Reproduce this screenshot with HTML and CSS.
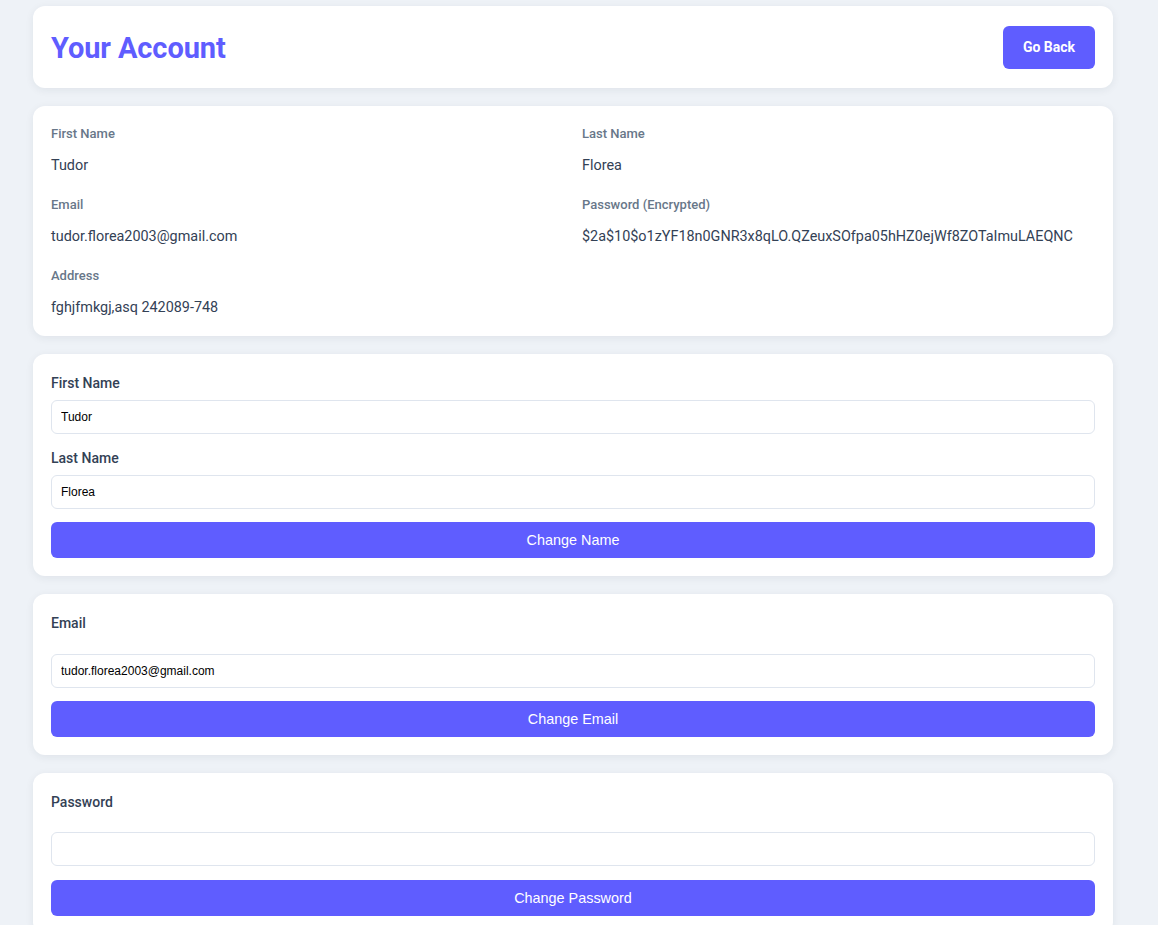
FILE: index.html
```html
<!DOCTYPE html>
<html lang="en">
<head>
<meta charset="utf-8">
<title>Your Account</title>
<link rel="stylesheet" href="styles.css">
</head>
<body>
<div class="page">
  <header class="card header">
    <h1 class="title">Your Account</h1>
    <button class="back-btn" type="button">Go Back</button>
  </header>

  <section class="card info">
    <div class="info-item">
      <div class="info-label">First Name</div>
      <div class="info-value">Tudor</div>
    </div>
    <div class="info-item">
      <div class="info-label">Last Name</div>
      <div class="info-value">Florea</div>
    </div>
    <div class="info-item">
      <div class="info-label">Email</div>
      <div class="info-value">tudor.florea2003@gmail.com</div>
    </div>
    <div class="info-item">
      <div class="info-label">Password (Encrypted)</div>
      <div class="info-value">$2a$10$o1zYF18n0GNR3x8qLO.QZeuxSOfpa05hHZ0ejWf8ZOTaImuLAEQNC</div>
    </div>
    <div class="info-item">
      <div class="info-label">Address</div>
      <div class="info-value">fghjfmkgj,asq 242089-748</div>
    </div>
  </section>

  <form class="card form">
    <div class="field">
      <label class="field-label">First Name</label>
      <input class="field-input" type="text" value="Tudor">
    </div>
    <div class="field">
      <label class="field-label">Last Name</label>
      <input class="field-input" type="text" value="Florea">
    </div>
    <button class="action-btn" type="button">Change Name</button>
  </form>

  <form class="card form">
    <div class="field">
      <label class="field-label field-label--spaced">Email</label>
      <input class="field-input" type="text" value="tudor.florea2003@gmail.com">
    </div>
    <button class="action-btn" type="button">Change Email</button>
  </form>

  <form class="card form">
    <div class="field field--password">
      <label class="field-label field-label--spaced2">Password</label>
      <input class="field-input" type="password" value="">
    </div>
    <button class="action-btn" type="button">Change Password</button>
  </form>
</div>
</body>
</html>
```

FILE: styles.css
```css
* { box-sizing: border-box; }

html, body {
  margin: 0;
  background: #eef2f7;
  font-family: Roboto, "Liberation Sans", Arial, sans-serif;
}

.page {
  width: 1080px;
  margin: 0 0 0 33px;
  padding-top: 6px;
  display: flex;
  flex-direction: column;
  gap: 18px;
  padding-bottom: 30px;
}

.card {
  background: #ffffff;
  border-radius: 12px;
  box-shadow: 0 2px 8px rgba(30, 41, 59, 0.07);
}

.header {
  display: flex;
  align-items: center;
  justify-content: space-between;
  padding: 20px 18px 19px 18px;
}

.title {
  margin: 0;
  font-size: 29px;
  font-weight: 700;
  color: #5f5dff;
  line-height: 34px;
  letter-spacing: -0.1px;
}

.back-btn {
  font-family: Roboto, "Liberation Sans", sans-serif;
  font-size: 14px;
  font-weight: 700;
  line-height: 17px;
  color: #ffffff;
  background: #5f5dff;
  border: none;
  border-radius: 6px;
  padding: 13px 20px;
}

.info {
  display: grid;
  grid-template-columns: 1fr 1fr;
  column-gap: 18px;
  row-gap: 20px;
  padding: 19px 18px 18px 18px;
}

.info-label {
  font-size: 13px;
  font-weight: 500;
  line-height: 18px;
  color: #687789;
}

.info-value {
  margin-top: 13px;
  font-size: 14.4px;
  line-height: 20px;
  color: #334155;
}

.form {
  padding: 19px 18px 18px 18px;
  display: flex;
  flex-direction: column;
}

.field {
  display: flex;
  flex-direction: column;
  margin-bottom: 14px;
}

.field--password { margin-bottom: 15px; }

.field-label {
  font-size: 14px;
  font-weight: 500;
  line-height: 20px;
  color: #334155;
  margin-bottom: 7px;
}

.field-label--spaced { margin-bottom: 21px; }
.field-label--spaced2 { margin-bottom: 20px; }

.field-input {
  font-family: "Liberation Sans", Arial, sans-serif;
  font-size: 12px;
  line-height: 14px;
  color: #000000;
  padding: 9px 9px;
  border: 1px solid #dfe5ee;
  border-radius: 6px;
  background: #ffffff;
  outline: none;
}

.field + .action-btn { margin-top: -1px; }

.action-btn {
  font-family: "Liberation Sans", Arial, sans-serif;
  font-size: 14.4px;
  line-height: 18px;
  color: #ffffff;
  background: #5f5dff;
  border: none;
  border-radius: 6px;
  padding: 9px 0;
  width: 100%;
}
```
